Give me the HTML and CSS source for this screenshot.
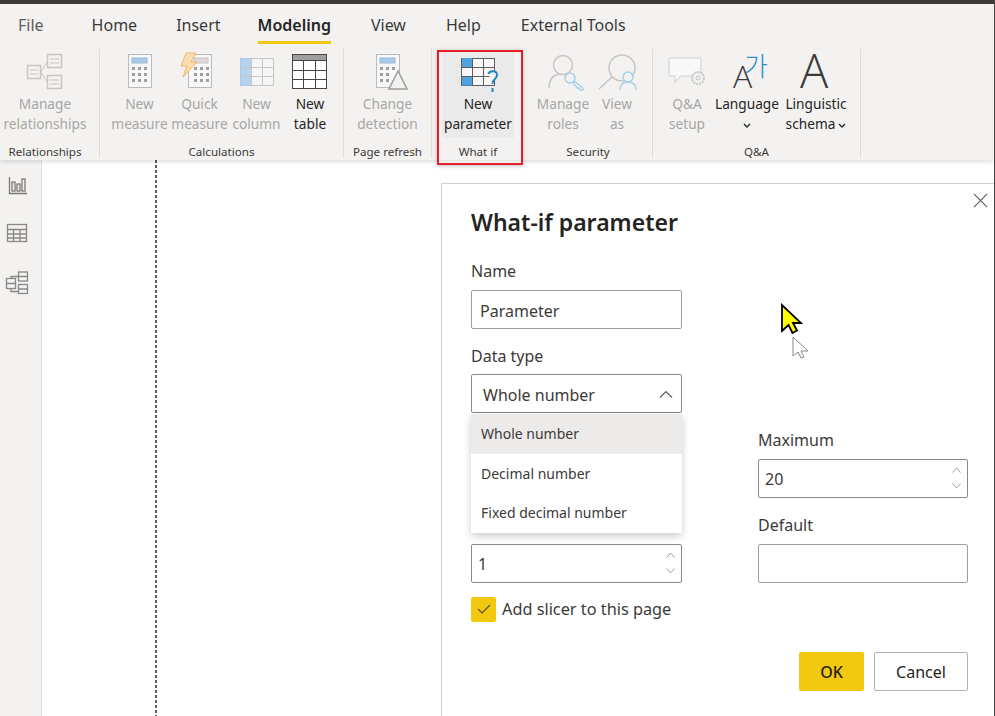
FILE: index.html
```html
<!DOCTYPE html>
<html lang="en">
<head>
<meta charset="UTF-8">
<title>What-if parameter</title>
<link rel="stylesheet" href="styles.css">
</head>
<body>
<div class="app">
    <div class="topbar"></div>

    <!-- tabs -->
    <div class="tabs">
        <span class="tab tab-file">File</span>
        <span class="tab">Home</span>
        <span class="tab">Insert</span>
        <span class="tab active">Modeling</span>
        <span class="tab tab-view">View</span>
        <span class="tab tab-help">Help</span>
        <span class="tab">External Tools</span>
    </div>

    <!-- ribbon -->
    <div class="ribbon">
        <div class="group g-rel">
            <div class="items">
                <div class="btn off">
                    <svg class="ico" viewBox="0 0 40 40" fill="none" stroke="#c8c6c4" stroke-width="1.5">
                        <rect x="2.5" y="13.5" width="13" height="13"/><rect x="22.5" y="2.5" width="14" height="13"/><rect x="22.5" y="23.5" width="14" height="13"/>
                        <path d="M16 20 22 10M16 20 22 30M5 18h8M5 22h8M25 7h9M25 11h9M25 28h9M25 32h9" stroke-width="1"/>
                    </svg>
                    Manage<br>relationships
                </div>
            </div>
            <div class="group-name">Relationships</div>
        </div>

        <div class="group g-calc">
            <div class="items">
                <div class="btn off">
                    <svg class="ico" viewBox="0 0 40 40">
                        <rect x="8.5" y="2.5" width="23" height="33" fill="#f8f8f8" stroke="#bdbbb9"/>
                        <rect x="12" y="6" width="15" height="5" fill="#a9cbe8" stroke="#8fb8dc"/>
                        <path d="M12 15h3v3h-3zM18 15h3v3h-3zM24 15h3v3h-3zM12 21h3v3h-3zM18 21h3v3h-3zM24 21h3v3h-3zM12 27h3v3h-3zM18 27h3v3h-3zM24 27h3v3h-3z" fill="#a19f9d"/>
                    </svg>
                    New<br>measure
                </div>
                <div class="btn off">
                    <svg class="ico" viewBox="0 0 40 40">
                        <rect x="8.5" y="2.5" width="23" height="33" fill="#f8f8f8" stroke="#bdbbb9"/>
                        <rect x="14" y="6" width="14" height="5" fill="#dddbd9" stroke="#c8c6c4"/>
                        <path d="M14 15h3v3h-3zM20 15h3v3h-3zM26 15h3v3h-3zM14 21h3v3h-3zM20 21h3v3h-3zM26 21h3v3h-3zM14 27h3v3h-3zM20 27h3v3h-3zM26 27h3v3h-3z" fill="#a19f9d"/>
                        <path d="M6 1h10L11 10h6L3 25l4-11H1z" fill="#fbdcb0" stroke="#f4b56a"/>
                    </svg>
                    Quick<br>measure
                </div>
                <div class="btn off">
                    <svg class="ico" viewBox="0 0 40 40">
                        <rect x="3.5" y="6.5" width="33" height="27" fill="#f5f5f5" stroke="#c8c6c4"/>
                        <rect x="3.5" y="6.5" width="11" height="27" fill="#b5d3ee" stroke="#a9cbe8"/>
                        <path d="M14.5 6v28M25.5 6v28M3 15.5h34M3 24.5h34" stroke="#c8c6c4" fill="none"/>
                    </svg>
                    New<br>column
                </div>
                <div class="btn">
                    <svg class="ico" viewBox="0 0 40 40">
                        <rect x="2.5" y="2.5" width="34" height="34" fill="#fff" stroke="#484644"/>
                        <rect x="3" y="3" width="33" height="5" fill="#a19f9d"/>
                        <path d="M3 8.5h33M3 18.5h33M3 27.5h33M13.5 8v28M25.5 8v28" stroke="#484644" fill="none"/>
                    </svg>
                    New<br>table
                </div>
            </div>
            <div class="group-name">Calculations</div>
        </div>

        <div class="group g-page">
            <div class="items">
                <div class="btn off">
                    <svg class="ico" viewBox="0 0 40 40">
                        <rect x="8.5" y="2.5" width="23" height="33" fill="#f8f8f8" stroke="#bdbbb9"/>
                        <rect x="12" y="6" width="15" height="5" fill="#a9cbe8" stroke="#8fb8dc"/>
                        <path d="M12 15h3v3h-3zM18 15h3v3h-3zM24 15h3v3h-3zM12 21h3v3h-3zM18 21h3v3h-3zM12 27h3v3h-3zM18 27h3v3h-3z" fill="#a19f9d"/>
                        <path d="M30 19 21 37H39Z" fill="#f3f2f1" stroke="#a19f9d" stroke-width="1.6"/>
                    </svg>
                    Change<br>detection
                </div>
            </div>
            <div class="group-name">Page refresh</div>
        </div>

        <div class="group g-whatif">
            <div class="items">
                <div class="btn hover">
                    <svg class="ico" viewBox="0 0 40 40">
                        <rect x="3.5" y="6.5" width="33" height="27" fill="#f8f8f8" stroke="#605e5c"/>
                        <rect x="3" y="6" width="11" height="9" fill="#4fa1e0"/>
                        <rect x="3" y="24" width="11" height="9.5" fill="#4fa1e0"/>
                        <path d="M3.5 6v28M14.5 6v28M25.5 6v28M3 15.5h34M3 24.5h34" stroke="#605e5c" fill="none"/>
                        <path d="M30.500 22c.5-3.500 8.500-4 8.500 1 0 4-4.500 4-4.500 9" fill="#f3f2f1" stroke="#1f86c4" stroke-width="2"/>
                        <path d="M33.500 36h2v4h-2z" fill="#1f86c4"/>
                    </svg>
                    New<br>parameter
                </div>
            </div>
            <div class="group-name">What if</div>
        </div>

        <div class="group g-sec">
            <div class="items">
                <div class="btn off">
                    <svg class="ico" viewBox="0 0 40 40" fill="none">
                        <circle cx="20" cy="13" r="9.500" stroke="#c8c6c4" stroke-width="1.5"/>
                        <path d="M6 36c0-9 5-13 10-14" stroke="#c8c6c4" stroke-width="1.5"/>
                        <circle cx="27" cy="26" r="5" stroke="#a6d0ea" stroke-width="1.5"/>
                        <path d="M31 29l9 7v2h-3l-1-2-2 0-1-2-2-1z" stroke="#a6d0ea" stroke-width="1.300"/>
                    </svg>
                    Manage<br>roles
                </div>
                <div class="btn off">
                    <svg class="ico" viewBox="0 0 40 40" fill="none">
                        <circle cx="25" cy="16" r="13" stroke="#c8c6c4" stroke-width="1.5"/>
                        <path d="M2 37 15 25" stroke="#c8c6c4" stroke-width="1.5"/>
                        <circle cx="31" cy="25" r="5" stroke="#a6d0ea" stroke-width="1.5" fill="#f3f2f1"/>
                        <path d="M23 38c0-5 3-8 8-8s8 3 8 8" stroke="#a6d0ea" stroke-width="1.5"/>
                    </svg>
                    View<br>as
                </div>
            </div>
            <div class="group-name">Security</div>
        </div>

        <div class="group g-qa">
            <div class="items">
                <div class="btn off">
                    <svg class="ico" viewBox="0 0 40 40" fill="none">
                        <path d="M3 6h30a1 1 0 0 1 1 1v16a1 1 0 0 1-1 1H14l-6 6v-6H3a1 1 0 0 1-1-1V7a1 1 0 0 1 1-1z" fill="#f8f8f8" stroke="#dedcda" stroke-width="1.500"/>
                        <circle cx="31" cy="26" r="6" fill="#f3f2f1" stroke="#c8c6c4" stroke-width="2" stroke-dasharray="2 1"/>
                        <circle cx="31" cy="26" r="2" stroke="#c8c6c4"/>
                    </svg>
                    Q&amp;A<br>setup
                </div>
                <div class="btn">
                    <svg class="ico" viewBox="0 0 40 40">
                        <text x="6" y="36" class="ico-a small">A</text>
                        <text x="17" y="24" class="ico-ko">가</text>
                    </svg>
                    Language<br>
                    <svg class="chev" viewBox="0 0 8 5"><path d="M1 1l3 3 3-3" fill="none" stroke="#252423" stroke-width="1.300"/></svg>
                </div>
                <div class="btn">
                    <svg class="ico" viewBox="0 0 40 40">
                        <text x="4" y="36" class="ico-a">A</text>
                    </svg>
                    Linguistic<br>
                    <span>schema<svg class="chev chev-after" viewBox="0 0 8 5"><path d="M1 1l3 3 3-3" fill="none" stroke="#252423" stroke-width="1.300"/></svg></span>
                </div>
            </div>
            <div class="group-name">Q&amp;A</div>
        </div>
    </div>

    <!-- red box round What if -->
    <div class="mark"></div>

    <div class="main">
        <div class="side">
            <svg class="side-ico" viewBox="0 0 24 24" fill="none" stroke="#7a7876" stroke-width="1.300">
                <path d="M4.500 4v16.500H22"/><rect x="7" y="9" width="3" height="9"/><rect x="12" y="11" width="3" height="7"/><rect x="17" y="6" width="3" height="12"/>
            </svg>
            <svg class="side-ico" viewBox="0 0 24 24" fill="none" stroke="#8a8886" stroke-width="1.300">
                <rect x="2.500" y="3.500" width="19" height="17"/><path d="M2.500 8.500h19M2.500 13h19M2.500 17h19M8.500 8v13M15 8v13"/>
            </svg>
            <svg class="side-ico tall" viewBox="0 0 24 28" fill="none" stroke="#8a8886" stroke-width="1.300">
                <rect x="1.500" y="9.500" width="9" height="10"/><rect x="13.500" y="3" width="9" height="9"/><rect x="13.500" y="15.500" width="9" height="9"/>
                <path d="M1.500 14.500h9M13.500 7.500h9M13.500 20h9M6 9.500V7.500h7.500M6 19.500v3h7.500"/>
            </svg>
        </div>
        <div class="canvas">
            <div class="page-edge"></div>
        </div>
    </div>

    <!-- dialog -->
    <div class="dialog">
        <svg class="close" viewBox="0 0 16 16"><path d="M1 1l14 14M15 1 1 15" stroke="#605e5c" stroke-width="1.200" fill="none"/></svg>
        <div class="title">What-if parameter</div>
        <div class="form">
            <div class="col">
                <div class="lbl first">Name</div>
                <div class="box">Parameter</div>
                <div class="lbl">Data type</div>
                <div class="box select">
                    Whole number
                    <svg class="select-arrow" viewBox="0 0 14 8"><path d="M1 7.500 7 1.500l6 6" fill="none" stroke="#605e5c" stroke-width="1.200"/></svg>
                    <div class="menu">
                        <div class="opt sel">Whole number</div>
                        <div class="opt">Decimal number</div>
                        <div class="opt">Fixed decimal number</div>
                    </div>
                </div>
                <div class="box num under-menu">
                    1
                    <div class="spin">
                        <svg viewBox="0 0 10 6"><path d="M1 5.500 5 1l4 4.500" fill="none" stroke="#a19f9d"/></svg>
                        <svg viewBox="0 0 10 6"><path d="M1 .500 5 5l4-4.500" fill="none" stroke="#a19f9d"/></svg>
                    </div>
                </div>
                <div class="check">
                    <span class="check-box"><svg viewBox="0 0 14 12"><path d="M1 6l4 4 8-8" fill="none" stroke="#605030" stroke-width="1.200"/></svg></span>
                    <span class="check-text">Add slicer to this page</span>
                </div>
            </div>
            <div class="col right">
                <div class="lbl first">Maximum</div>
                <div class="box num">
                    20
                    <div class="spin">
                        <svg viewBox="0 0 10 6"><path d="M1 5.500 5 1l4 4.500" fill="none" stroke="#a19f9d"/></svg>
                        <svg viewBox="0 0 10 6"><path d="M1 .500 5 5l4-4.500" fill="none" stroke="#a19f9d"/></svg>
                    </div>
                </div>
                <div class="lbl">Default</div>
                <div class="box"></div>
            </div>
        </div>
        <div class="actions">
            <div class="act ok">OK</div>
            <div class="act cancel">Cancel</div>
        </div>
    </div>

    <!-- pointers from the recording -->
    <svg class="cursor cur-yellow" viewBox="0 0 24 32"><path d="M2 2v26l6.500-6 4 8 4.500-2.500-4-7.500H21z" fill="#ffff00" stroke="#000" stroke-width="1.800"/></svg>
    <svg class="cursor cur-gray" viewBox="0 0 18 25"><path d="M1 2v19l5-4 3 6 3-1-3-6h7z" fill="#fff" stroke="#8a8886"/></svg>
</div>
</body>
</html>
```

FILE: styles.css
```css
*{
    box-sizing: border-box;
}
body{
    margin: 0;
    background: #fff;
    font-family: "Noto Sans", "Open Sans", sans-serif;
    color: #252423;
}
.app{
    position: relative;
    width: 995px;
    height: 716px;
    overflow: hidden;
    border-right: 1px solid #484644;
    display: flex;
    flex-direction: column;
}
.topbar{
    height: 4px;
    background: #3b3a39;
}

/* tabs */
.tabs{
    height: 45px;
    background: #f3f2f1;
    display: flex;
    gap: 39px;
    padding-left: 18px;
}
.tab{
    font-size: 16px;
    line-height: 42px;
    color: #3b3a39;
    height: 40px;
}
.tab-file{
    margin-right: 9px;
    color: #605e5c;
}
.tab-view,
.tab-help{
    margin-right: 1px;
}
.tab.active{
    font-weight: 600;
    color: #252423;
    border-bottom: 3px solid #f2c811;
    height: 40px;
    margin: 0 1px 0 -2px;
}

/* ribbon */
.ribbon{
    height: 111px;
    background: #f3f2f1;
    display: flex;
    align-items: flex-start;
    box-shadow: 0 2px 4px rgba(0,0,0,.12);
    position: relative;
    z-index: 1;
    flex: none;
}
.group{
    height: 109px;
    border-right: 1px solid #dedcda;
    padding-top: 3px;
    flex: none;
}
.items{
    display: grid;
    height: 91px;
}
.group-name{
    font-size: 11.600px;
    line-height: 17px;
    text-align: center;
    color: #3b3a39;
}
.g-rel{ width: 100px; padding-right: 9px; }
.g-rel .items{ grid-template-columns: 90px; }
.g-calc{ width: 244px; }
.g-calc .items{ grid-template-columns: 61px 59px 55px 52px; padding-left: 9px; }
.g-page{ width: 88px; }
.g-whatif{ width: 92px; border-right: 0; }
.g-whatif .items{ grid-template-columns: 72px; padding-left: 10px; }
.g-sec{ width: 129px; }
.g-sec .items{ grid-template-columns: 60px 48px; padding-left: 9px; }
.g-qa{ width: 208px; }
.g-qa .items{ grid-template-columns: 54px 66px 72px; padding-left: 7px; }

.btn{
    display: block;
    text-align: center;
    font-size: 13.700px;
    line-height: 20px;
    height: 86px;
    white-space: nowrap;
    color: #252423;
}
.btn.off{
    color: #a8a6a4;
}
.btn.hover{
    background: #ebeaea;
}
.ico{
    display: block;
    width: 40px;
    height: 40px;
    margin: 0 auto 2px;
    overflow: visible;
}
.ico-a{
    font-family: "Open Sans", sans-serif;
    font-weight: 300;
    font-size: 47px;
    fill: #3b3a39;
}
.ico-a.small{
    font-size: 32px;
}
.ico-ko{
    font-family: "Noto Sans CJK KR", sans-serif;
    font-weight: 300;
    font-size: 26px;
    fill: #2b8fcb;
}
.chev{
    width: 8px;
    height: 5px;
    display: inline-block;
    vertical-align: middle;
}
.chev-after{
    margin-left: 3px;
}
.mark{
    position: absolute;
    left: 437px;
    top: 50px;
    width: 86px;
    height: 115px;
    border: 2px solid #e3202a;
    box-shadow: 0 1px 4px rgba(0,0,0,.25);
    z-index: 2;
}

/* below the ribbon */
.main{
    flex: 1;
    display: flex;
}
.side{
    width: 42px;
    background: #f3f2f1;
    border-right: 1px solid #e1dfdd;
    display: flex;
    flex-direction: column;
    align-items: center;
    gap: 24px;
    padding-top: 13px;
    padding-right: 7px;
}
.side-ico{
    width: 24px;
    height: 24px;
    flex: none;
}
.side-ico.tall{
    height: 28px;
}
.canvas{
    flex: 1;
    display: flex;
    padding-left: 112px;
}
.page-edge{
    width: 3px;
    background: repeating-linear-gradient(to bottom, #605e5c 0, #605e5c 3px, transparent 3px, transparent 5px) center / 2px 100% no-repeat;
}

/* dialog */
.dialog{
    position: absolute;
    left: 441px;
    top: 183px;
    right: 0;
    bottom: 0;
    background: #fff;
    border-left: 1px solid #d2d0ce;
    border-top: 1px solid #d2d0ce;
    padding: 22px 26px 0 29px;
    z-index: 3;
}
.close{
    position: absolute;
    right: 6px;
    top: 9px;
    width: 15px;
    height: 15px;
}
.title{
    font-size: 23px;
    font-weight: 600;
    line-height: 32px;
    color: #252423;
}
.form{
    display: flex;
    gap: 76px;
}
.col{
    width: 211px;
}
.col.right{
    width: 210px;
    padding-top: 192px;
}
.lbl{
    font-size: 16px;
    line-height: 20px;
    margin-top: 17px;
    margin-bottom: 8px;
    color: #3b3a39;
}
.lbl.first{
    margin-top: 23px;
    margin-bottom: 9px;
}
.col.right .lbl.first{
    margin-top: 0;
}
.col.right .lbl{
    margin-bottom: 9px;
}
.box{
    position: relative;
    height: 39px;
    border: 1px solid #a19f9d;
    border-radius: 2px;
    font-size: 16px;
    line-height: 40px;
    padding-left: 8px;
    color: #3b3a39;
}
.select{
    padding-left: 11px;
    border-color: #8a8886;
}
.select-arrow{
    position: absolute;
    right: 8px;
    top: 15px;
    width: 14px;
    height: 8px;
}
.menu{
    position: absolute;
    left: -1px;
    right: -1px;
    top: 39px;
    background: #fff;
    box-shadow: 0 3px 8px rgba(0,0,0,.2);
    z-index: 1;
}
.opt{
    height: 39.500px;
    line-height: 39px;
    padding-left: 10px;
    font-size: 14px;
    color: #3b3a39;
}
.opt.sel{
    background: #edebe9;
}
.num{
    padding-left: 6px;
    border-color: #8a8886;
    line-height: 39px;
}
.under-menu{
    margin-top: 131px;
}
.spin{
    position: absolute;
    right: 5px;
    top: 7px;
    width: 11px;
    display: flex;
    flex-direction: column;
    gap: 10px;
}
.spin svg{
    display: block;
    width: 11px;
    height: 6px;
}
.check{
    display: flex;
    align-items: center;
    gap: 6px;
    margin-top: 13px;
    font-size: 16.300px;
    line-height: 25px;
    color: #3b3a39;
}
.check-text{
    padding-top: 1px;
}
.check-box{
    width: 25px;
    height: 25px;
    border-radius: 2px;
    background: #f2c811;
    display: flex;
    align-items: center;
    justify-content: center;
}
.check-box svg{
    width: 14px;
    height: 12px;
}
.actions{
    display: flex;
    justify-content: flex-end;
    gap: 10px;
    margin-top: 30px;
}
.act{
    height: 39px;
    line-height: 40px;
    text-align: center;
    font-size: 16px;
    border-radius: 2px;
}
.ok{
    width: 65px;
    background: #f2c811;
    font-weight: 500;
}
.cancel{
    width: 94px;
    border: 1px solid #b3b0ad;
    line-height: 39px;
}

/* pointers */
.cursor{
    position: absolute;
    z-index: 4;
}
.cur-yellow{
    left: 780px;
    top: 303px;
    width: 24px;
    height: 32px;
}
.cur-gray{
    left: 792px;
    top: 335px;
    width: 18px;
    height: 25px;
}
```
